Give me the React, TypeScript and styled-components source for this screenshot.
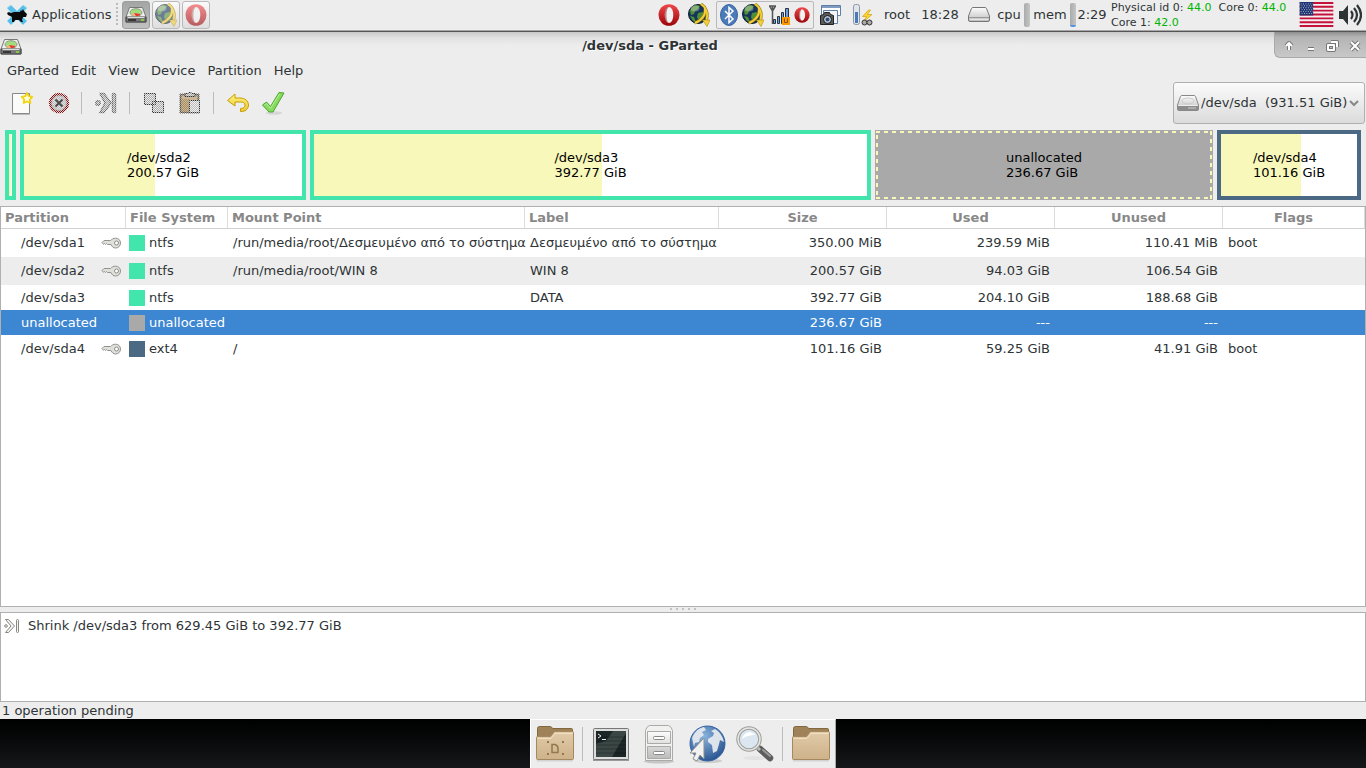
import React from 'react';
import styled, { createGlobalStyle, css } from 'styled-components';

const GlobalStyle = createGlobalStyle`
  *, *::before, *::after { box-sizing: border-box; }
  body {
    margin: 0;
    background: #0b0c0f;
    color: #2e3436;
    font-family: 'DejaVu Sans', sans-serif;
    font-size: 13px;
    line-height: 16px;
  }
  button, select {
    margin: 0;
    padding: 0;
    border: 0;
    background: none;
    color: inherit;
    font: inherit;
  }
  svg { display: block; flex: none; }
`;

const Desktop = styled.div`
  display: flex;
  flex-direction: column;
  min-height: 100vh;
  background: linear-gradient(#000 0, #000 720px, #15171a 100%);
`;

/* ---------- top panel ---------- */

const Panel = styled.header`
  display: flex;
  align-items: center;
  justify-content: space-between;
  height: 32px;
  padding-bottom: 2px;
  background: #ededed;
  border-bottom: 1px solid #555;
  box-shadow: inset 0 -1px #a8a8a8;
  white-space: nowrap;
`;

const PanelGroup = styled.div`
  display: flex;
  align-items: center;
`;

const ApplicationsButton = styled.button`
  display: flex;
  align-items: center;
  gap: 4px;
  padding: 0 5px 0 6px;
`;

const Handle = styled.span`
  width: 2px;
  height: 24px;
  margin-right: 4px;
  background: repeating-linear-gradient(#bbb 0 2px, transparent 2px 4px);
`;

const TaskButton = styled.button<{ $active?: boolean }>`
  display: flex;
  align-items: center;
  justify-content: center;
  width: 28px;
  height: 28px;
  margin-right: 2px;
  border: 1px solid ${(p) => (p.$active ? '#9c9e9d' : '#b9b9b9')};
  border-radius: 3px;
  background: ${(p) => (p.$active ? 'linear-gradient(#a2a5a3, #bfc2c0)' : 'linear-gradient(#fafafa, #dedede)')};
  svg { opacity: ${(p) => (p.$active ? 1 : 0.6)}; }
`;

const Slot = styled.span<{ $width: number }>`
  display: flex;
  align-items: center;
  justify-content: center;
  width: ${(p) => p.$width}px;
`;

const Tray = styled.div`
  display: flex;
  align-items: center;
  justify-content: space-between;
  width: 98px;
  height: 28px;
  margin-left: 2px;
  padding: 0 3px;
  border: 1px solid #b9b9b9;
  border-radius: 2px;
`;

const Meter = styled.span<{ $fill?: boolean }>`
  width: 6px;
  height: 24px;
  border-radius: 2px;
  background: ${(p) =>
    p.$fill
      ? 'linear-gradient(transparent 22px, #5294e2 22px), linear-gradient(90deg, #a9acaa, #c4c6c5)'
      : 'linear-gradient(90deg, #a9acaa, #c4c6c5)'};
`;

const Sensors = styled.div`
  width: 191px;
  padding-left: 3px;
  font-size: 11px;
  line-height: 15px;
  white-space: pre;
  b { color: #00b400; font-weight: normal; }
`;

/* ---------- window ---------- */

const AppWindow = styled.main`
  display: flex;
  flex: 1;
  flex-direction: column;
  background: linear-gradient(#c9c9c9, #e2e2e2 6px, #ededed 14px);
`;

const TitleBar = styled.div`
  display: flex;
  align-items: flex-start;
  height: 26px;
`;

const TitleIcon = styled.span`
  padding: 6px 4px 0 0;
`;

const Title = styled.h1`
  flex: 1;
  margin: 0;
  padding-top: 6px;
  font-size: 13px;
  line-height: 16px;
  text-align: center;
  text-shadow: 1px 1px #fff;
`;

const WindowControls = styled.div`
  display: flex;
  align-items: center;
  justify-content: space-around;
  width: 92px;
  height: 26px;
  padding: 2px 0 0 3px;
  border: 1px solid #a9a9a9;
  border-top: 0;
  border-right: 0;
  border-bottom-left-radius: 6px;
  background: linear-gradient(#8e8e8e, #b4b4b4 5px, #c8c8c8);
`;

const MenuBar = styled.nav`
  display: flex;
  align-items: center;
  height: 24px;
  padding: 2px 0 0 1px;
`;

const MenuButton = styled.button`
  padding: 2px 6px;
`;

const ToolBar = styled.div`
  display: flex;
  align-items: center;
  height: 42px;
  padding-right: 1px;
`;

const ToolButton = styled.button<{ $width?: number }>`
  display: flex;
  align-items: center;
  justify-content: center;
  width: ${(p) => p.$width ?? 36}px;
  height: 40px;
`;

const ToolSeparator = styled.span`
  width: 1px;
  height: 22px;
  margin: 0 6px 0 5px;
  background: #bcbcbc;
`;

const DeviceBox = styled.label`
  display: flex;
  align-items: center;
  position: relative;
  width: 192px;
  height: 42px;
  margin-left: auto;
  padding: 0 5px 0 3px;
  border: 1px solid #b0b0b0;
  border-radius: 3px;
  background: linear-gradient(#fbfbfb, #dbdbdb);
  white-space: nowrap;
`;

const DeviceSelect = styled.select`
  flex: 1;
  height: 32px;
  padding-left: 2px;
  appearance: none;
  outline: none;
`;

const Chevron = styled.svg`
  position: absolute;
  right: 5px;
  pointer-events: none;
`;

/* ---------- disk map ---------- */

const DiskMap = styled.section`
  display: grid;
  grid-template-columns: 11px 286fr 561fr 338fr 144fr;
  gap: 4px;
  padding: 6px 5px;
`;

const Segment = styled.div<{ $color: string; $used: number; $free?: boolean }>`
  display: flex;
  align-items: center;
  justify-content: center;
  position: relative;
  height: 70px;
  overflow: hidden;
  border: 4px solid ${(p) => p.$color};
  background: linear-gradient(90deg, #f8f8ba ${(p) => p.$used}%, #fff ${(p) => p.$used}%);
  color: #000;
  line-height: 15px;
  white-space: pre;
  ${(p) =>
    p.$free &&
    css`
      border: 1px solid ${p.$color};
      background: ${p.$color};
    `}
`;

const FreeOutline = styled.svg`
  position: absolute;
  inset: 0;
  width: 100%;
  height: 100%;
`;

/* ---------- partition table ---------- */

const TablePane = styled.section`
  flex: 1;
  border: 1px solid #b0b0b0;
  background: #fff;
`;

const PartitionTable = styled.table`
  width: 100%;
  border-collapse: separate;
  border-spacing: 0;
  table-layout: fixed;
  white-space: nowrap;
`;

const HeadCell = styled.th<{ $align?: string }>`
  height: 22px;
  padding: 0 4px;
  border-right: 1px solid #dcdcdc;
  border-bottom: 1px solid #d0d0d0;
  color: #888;
  font-weight: bold;
  text-align: ${(p) => p.$align ?? 'left'};
`;

const Row = styled.tr<{ $height: number; $shade?: boolean; $selected?: boolean }>`
  height: ${(p) => p.$height}px;
  background: ${(p) => (p.$selected ? '#3d86d1' : p.$shade ? '#ededed' : '#fff')};
  color: ${(p) => (p.$selected ? '#fff' : 'inherit')};
`;

const Cell = styled.td<{ $align?: string }>`
  padding: 0 5px;
  text-align: ${(p) => p.$align ?? 'left'};
`;

const NameCell = styled.div`
  display: flex;
  align-items: center;
  justify-content: space-between;
  padding-left: 15px;
`;

const FsCell = styled.div`
  display: flex;
  align-items: center;
  gap: 4px;
  margin-left: -2px;
`;

const Swatch = styled.span<{ $color: string }>`
  flex: none;
  width: 16px;
  height: 16px;
  background: ${(p) => p.$color};
`;

/* ---------- pending operations ---------- */

const Splitter = styled.div`
  display: flex;
  justify-content: center;
  height: 5px;
  padding-top: 1px;
`;

const Grip = styled.span`
  width: 26px;
  height: 2px;
  background: repeating-linear-gradient(90deg, #c0c4c1 0 2px, transparent 2px 6px);
`;

const Operations = styled.ul`
  height: 90px;
  margin: 0;
  padding: 3px;
  border: 1px solid #b0b0b0;
  background: #fff;
  list-style: none;
`;

const Operation = styled.li`
  display: flex;
  align-items: center;
  gap: 8px;
  height: 20px;
`;

const StatusBar = styled.footer`
  height: 17px;
  padding: 1px 0 0 2px;
`;

/* ---------- dock ---------- */

const Dock = styled.nav`
  display: flex;
  align-items: center;
  align-self: center;
  height: 49px;
  border: 1px solid #fff;
  border-right-color: #aaa;
  border-bottom: 0;
  background: #ededed;
`;

const DockButton = styled.button`
  display: flex;
  align-items: center;
  justify-content: center;
  width: 48px;
  height: 48px;
`;

const DockSeparator = styled.span`
  width: 1px;
  height: 34px;
  margin: 0 4px 0 3px;
  background: #bcbcbc;
`;

/* ---------- drawings ---------- */

const Defs = () => (
  <svg width="0" height="0" style={{ position: 'absolute' }} aria-hidden="true">
    <defs>
      <pattern id="dither" width="2" height="2" patternUnits="userSpaceOnUse">
        <path d="M0 0h1v1h-1zM1 1h1v1h-1z" fill="#fff" shapeRendering="crispEdges" />
      </pattern>
      <mask id="dithered" maskUnits="userSpaceOnUse" x="0" y="0" width="24" height="24">
        <rect width="24" height="24" fill="url(#dither)" />
      </mask>
      <linearGradient id="red" x1="0" y1="0" x2="0" y2="1">
        <stop offset="0" stopColor="#f0474b" />
        <stop offset="1" stopColor="#9b0508" />
      </linearGradient>
      <linearGradient id="silver" x1="0" y1="0" x2="0" y2="1">
        <stop offset="0" stopColor="#fdfdfd" />
        <stop offset="1" stopColor="#bcbcbc" />
      </linearGradient>
      <linearGradient id="folder" x1="0" y1="0" x2="0" y2="1">
        <stop offset="0" stopColor="#e2cba9" />
        <stop offset="1" stopColor="#cdb28a" />
      </linearGradient>
      <linearGradient id="gold" x1="0" y1="0" x2="0" y2="1">
        <stop offset="0" stopColor="#fff27a" />
        <stop offset="1" stopColor="#edc53a" />
      </linearGradient>
      <radialGradient id="ocean" cx="0.4" cy="0.3" r="0.8">
        <stop offset="0" stopColor="#8ab4de" />
        <stop offset="1" stopColor="#204a87" />
      </radialGradient>
    </defs>
  </svg>
);

const XfceLogo = () => (
  <svg width="22" height="22" viewBox="0 0 22 22">
    <path d="M1 4l4-3 6 6 6-6 4 3-6 7 6 6-4 4-6-6-6 6-4-4 6-6z" fill="#58bfe9" stroke="#a5dcf3" />
    <path d="M1 9l2-1 2 1 3-1h6l1-2 1 1 1-2 1 2 3 3-1 3-3 0-1 3 1 2-2 0-2-2-4 0-1 2-2 0 0-5-4-2z" fill="#0a0a0a" />
  </svg>
);

const GpartedIcon = () => (
  <svg width="22" height="18" viewBox="0 0 22 18">
    <path d="M4.500 1.500h13l3.500 9.500v5H1v-5z" fill="#eee" stroke="#777" />
    <path d="M1 11h20v5H1z" fill="#777" stroke="#444" />
    <path d="M2.500 11.500h17" stroke="#ddd" />
    <path d="M3 14h8" stroke="#222" strokeWidth="1.500" />
    <ellipse cx="11" cy="6.500" rx="6" ry="3.800" fill="#a3dc7c" stroke="#8d9a84" />
    <path d="M9 7l6.500 1c-1 1.500-2.500 2.200-4.500 2.200z" fill="#e33" />
    <path d="M9 7l-3 1.500 2 1.500h2.500z" fill="#f2b27a" />
    <path d="M16 14h3" stroke="#8ae234" strokeWidth="1.500" />
  </svg>
);

const GlobeArrow = () => (
  <svg width="22" height="24" viewBox="0 0 22 24">
    <circle cx="10" cy="11" r="9.500" fill="#16355c" stroke="#0d1c30" />
    <path d="M2 8c1-3 4-6 7-6l3 1-2 3-3 2-1 3-3 1zM10 10l5-1 2 3-2 4-4 3-2-5zM2 13l4 1 2 5-3-1z" fill="#4f8f38" />
    <ellipse cx="7" cy="5.500" rx="4.500" ry="3" fill="#fff" opacity=".3" />
    <path d="M13 1c5 3 7.500 9 5.500 16M17 5c1 7-3 12-10 15" fill="none" stroke="#9a7a0c" strokeWidth="3" />
    <path d="M13 1c5 3 7.500 9 5.500 16M17 5c1 7-3 12-10 15" fill="none" stroke="#f3d03a" strokeWidth="2" />
    <path d="M14.500 17l7.500 0-3 6.500z" fill="#f3d03a" stroke="#b08c12" strokeWidth=".6" />
  </svg>
);

const OperaIcon = ({ size = 22 }: { size?: number }) => (
  <svg width={size} height={size} viewBox="0 0 22 22">
    <ellipse cx="11" cy="11" rx="10.500" ry="10.800" fill="url(#red)" />
    <ellipse cx="11" cy="11" rx="4.300" ry="8" fill="#f2f2f2" />
    <path d="M11 3c-3 0-4.300 4-4.300 8s1.300 8 4.300 8c-1.800-1-2.600-4-2.600-8s.8-7 2.600-8z" fill="#8c0a0c" opacity=".5" />
  </svg>
);

const Bluetooth = () => (
  <svg width="18" height="22" viewBox="0 0 18 22">
    <ellipse cx="9" cy="11" rx="8.500" ry="10.500" fill="#4a7ab8" stroke="#3a659f" />
    <path d="M5 7l8 8-4 3.500v-15l4 3.500-8 8" fill="none" stroke="#fff" strokeWidth="1.500" />
  </svg>
);

const Signal = () => (
  <svg width="21" height="22" viewBox="0 0 21 22">
    <path d="M0 2h7M3.500 2v18M0.500 2l3 5 3-5" fill="none" stroke="#555" strokeWidth="1.500" />
    <path d="M4.500 15.500h2v4h-2zM8.500 12.500h2v7h-2zM12.500 8.500h2v11h-2zM16.500 4.500h3v15h-3z" fill="#6d9fdc" stroke="#28323e" />
    <path d="M13 13h8v8h-8z" fill="#f90" />
    <path d="M15.500 14.500v4h3v-4" fill="none" stroke="#86500a" />
  </svg>
);

const Screenshot = () => (
  <svg width="22" height="22" viewBox="0 0 22 22">
    <path d="M2.500 1.500h19v10h-19z" fill="#fff" stroke="#5f7fa5" />
    <path d="M3 2h18v2H3z" fill="#7f9cc0" />
    <path d="M4.500 6.500h14v13h-14z" fill="#f3f5f8" stroke="#5f7fa5" />
    <path d="M1.500 11.500l3-1 1-2h5l1 2 3 1v9h-13z" fill="#5a5a5a" stroke="#222" />
    <circle cx="8.500" cy="15.500" r="4" fill="#bcc8d5" stroke="#111" />
    <circle cx="8.500" cy="15.500" r="2" fill="#2d4e74" />
  </svg>
);

const PowerGauge = () => (
  <svg width="22" height="22" viewBox="0 0 22 22">
    <rect x="2.500" y="0.500" width="6" height="20" rx="2" fill="#dfe5ea" stroke="#8b98a6" />
    <path d="M4 8h3v11H4z" fill="#4a7ab8" />
    <path d="M17.500 6l-6 6.500h4l-2.500 5 8-7h-4.500l3-4.500z" fill="#ffd42a" stroke="#c79800" strokeWidth=".6" />
    <circle cx="13.500" cy="18.500" r="2.500" fill="#aaa" stroke="#333" />
    <circle cx="18.500" cy="18.500" r="2.500" fill="#aaa" stroke="#333" />
  </svg>
);

const Drive = () => (
  <svg width="22" height="16" viewBox="0 0 22 16">
    <path d="M5 .5h12q1 0 1.500 1L21.500 10v4q0 1.500-1 1.500h-19q-1 0-1-1.500V10l3-8.500q.5-1 1.500-1z" fill="url(#silver)" stroke="#888" />
    <path d="M1 11h20v4H1z" fill="#8c8c8c" />
    <ellipse cx="11" cy="6" rx="6" ry="3" fill="none" stroke="#ccc" />
    <path d="M1.500 10.500h19" stroke="#eee" />
    <path d="M11 13h8" stroke="#ccc" />
  </svg>
);

const PlainDrive = () => (
  <svg width="22" height="15" viewBox="0 0 22 15">
    <path d="M5 .5h12q1 0 1.500 1L21.500 9v4q0 1.500-1.500 1.500H2Q.5 14.500.5 13V9l3-7.500q.5-1 1.500-1z" fill="url(#silver)" stroke="#777" />
    <path d="M1 10.500h20" stroke="#999" />
    <path d="M2 12.500h18" stroke="#e8e8e8" />
  </svg>
);

const UsFlag = () => (
  <svg width="35" height="25" viewBox="0 0 35 26">
    <path d="M0 0h35v26H0z" fill="#f5eef0" />
    <path d="M0 1h35M0 5h35M0 9h35M0 13h35M0 17h35M0 21h35M0 25h35" stroke="#c4123a" strokeWidth="2" />
    <path d="M0 0h14v14H0z" fill="#1d3370" />
    <path d="M1 2h13M2 4h12M1 6h13M2 8h12M1 10h13M2 12h12" stroke="#b9c3dc" strokeDasharray="1 1.500" />
  </svg>
);

const Speaker = () => (
  <svg width="23" height="22" viewBox="0 0 23 22">
    <path d="M0 7h4l5-6v20l-5-6H0z" fill="#2e3436" />
    <path d="M12 7q3 4 0 8M15 4q6 7 0 14M18 1q8 10 0 20" fill="none" stroke="#2e3436" strokeWidth="2.200" />
  </svg>
);

const ControlIcon = ({ d }: { d: string }) => (
  <svg width="14" height="14" viewBox="0 0 14 14" strokeLinejoin="round">
    <path d={d} fill="none" stroke="#777" strokeWidth="4" />
    <path d={d} fill="none" stroke="#fff" strokeWidth="2" />
  </svg>
);

const NewIcon = () => (
  <svg width="24" height="24" viewBox="0 0 24 24">
    <path d="M3.500 2.500h17v20h-17z" fill="#fbfbf9" stroke="#888" />
    <path d="M3 23.500h18" stroke="#bbb" />
    <path d="M18 2l1.700 3.200 3.600.6-2.500 2.700.5 3.500-3.300-1.500-3.300 1.500.5-3.500-2.500-2.700 3.600-.6z" fill="#fffde0" stroke="#f2d40e" strokeWidth="1.800" strokeLinejoin="round" />
  </svg>
);

const DeleteIcon = () => (
  <svg width="24" height="24" viewBox="0 0 24 24">
    <circle cx="12" cy="12" r="8" fill="#e2e2e2" stroke="#ccc" strokeWidth="3" />
    <g mask="url(#dithered)">
      <circle cx="12" cy="12" r="9" fill="#bbb" stroke="#8e0a0a" strokeWidth="2.500" />
    </g>
    <path d="M8.500 8.500l7 7M15.500 8.500l-7 7" stroke="#4a4a4a" strokeWidth="2" />
  </svg>
);

const ResizeShape = () => (
  <>
    <path d="M6 2.500h4l7 9.500-7 9.500H6l5-9.500z" />
    <circle cx="4" cy="12" r="2.200" />
    <rect x="18.500" y="2.500" width="3" height="19" rx="1" />
  </>
);

const ResizeIcon = () => (
  <svg width="24" height="24" viewBox="0 0 24 24">
    <g fill="#ddd" stroke="#c6c6c6"><ResizeShape /></g>
    <g fill="#a8a8a8" stroke="#666" strokeWidth="1.500" mask="url(#dithered)"><ResizeShape /></g>
  </svg>
);

const SmallResizeIcon = () => (
  <svg width="16" height="16" viewBox="0 0 16 16" fill="#f6f6f4" stroke="#85877f">
    <path d="M1.500 1.500h3l6 6.500-6 6.500h-3L7 8z" />
    <circle cx="2" cy="8" r="1.300" />
    <rect x="12.500" y="1.500" width="2" height="13" rx="1" />
  </svg>
);

const CopyIcon = () => (
  <svg width="24" height="24" viewBox="0 0 24 24">
    <path d="M2.500 2.500h11v11h-11zM10.500 10.500h11v11h-11z" fill="#ececec" stroke="#c0c0c0" />
    <g mask="url(#dithered)">
      <path d="M2.500 2.500h11v11h-11zM10.500 10.500h11v11h-11z" fill="#aaa" stroke="#333" />
    </g>
  </svg>
);

const PasteIcon = () => (
  <svg width="24" height="24" viewBox="0 0 24 24">
    <path d="M2.500 3.500h18v18h-18z" fill="#cbb795" stroke="#a69579" />
    <path d="M7 5.500v-3h3l1-1h2l1 1h3v3z" fill="#ddd" stroke="#999" />
    <path d="M11.500 9.500h10v12h-10z" fill="#f2f2f2" stroke="#bbb" />
    <g mask="url(#dithered)">
      <path d="M2.500 3.500h18v18h-18z" fill="none" stroke="#555" strokeWidth="2" />
      <path d="M4 8h7v12H4z" fill="#a98f60" />
      <path d="M7 5.500v-3h3l1-1h2l1 1h3v3z" fill="#aaa" stroke="#333" />
      <path d="M11.500 9.500h10v12h-10z" fill="#bbb" stroke="#333" />
    </g>
  </svg>
);

const UndoIcon = () => (
  <svg width="24" height="24" viewBox="0 0 24 24">
    <path d="M1.500 9.500l7.500-6.500v4h5c5 0 8.500 3 8.500 7 0 3.500-2.500 6-6 6.500h-2v-3c3 0 4.500-1.500 4.500-3.500s-1.500-3-4.500-3H9v4z" fill="url(#gold)" stroke="#c4a000" strokeLinejoin="round" />
  </svg>
);

const ApplyIcon = () => (
  <svg width="24" height="24" viewBox="0 0 24 24">
    <ellipse cx="13" cy="22" rx="8" ry="1.800" fill="#d6d6d6" />
    <path d="M1.500 14l4-3 4 4.500L18 1.500l5 0.500-11 19H8z" fill="#84db5e" stroke="#4da52c" strokeLinejoin="round" />
    <path d="M3.500 14l2-1.300 4 4.600L18.500 3" fill="none" stroke="#b9f09d" />
  </svg>
);

const KeyIcon = () => (
  <svg width="20" height="14" viewBox="0 0 20 14">
    <path d="M9.500 4.500H3l-2 2 1.500 1.800 1-.8 1 1 1-1 1 1h3.500c1 2.300 2.500 3.500 4.500 3.500 3 0 5-2.200 5-5s-2-4.800-5-4.800c-2.200 0-4 1.200-5 2.300z" fill="#dfdfdc" stroke="#93938e" />
    <circle cx="15.500" cy="7" r="2" fill="#fff" stroke="#8d8d88" />
  </svg>
);

const FolderIcon = ({ docs }: { docs?: boolean }) => (
  <svg width="40" height="38" viewBox="0 0 40 38">
    <path d="M2 35.500h36" stroke="#d2d2d2" strokeWidth="2" />
    <path d="M2.500 3.500q0-2 2-2h11q1 0 2 2h19q1 0 1 1V18h-35z" fill="#a08259" stroke="#83683f" />
    <path d="M1.500 12.500q0-1 1-1h13l4-5h18q1 0 1 1v26q0 1-1 1h-35q-1 0-1-1z" fill="url(#folder)" stroke="#a5885d" />
    <path d="M2.500 13.500h13.500l4-5h17.500" fill="none" stroke="#f0dfc4" />
    {docs && (
      <g fill="none" stroke="#94774e">
        <path d="M17 19.500h3q3 1 3 4v4h-6z" strokeWidth="1.500" />
        <path d="M12 17h2M12 29h2M27 17h2M27 29h2" strokeWidth="2" />
      </g>
    )}
  </svg>
);

const TerminalIcon = () => (
  <svg width="38" height="36" viewBox="0 0 38 36">
    <path d="M1 34h36" stroke="#999" strokeWidth="2" />
    <rect x="1.500" y="2.500" width="35" height="31" rx="1" fill="#ddd" stroke="#777" />
    <path d="M4 5h30v26H4z" fill="#1c2626" />
    <path d="M21 5h13v2L20 31H4V18l10-3z" fill="#55625f" opacity=".55" />
    <path d="M4 11h30M4 15h30M4 19h30M4 23h30M4 27h30" stroke="#000" opacity=".25" />
    <path d="M6 8l3 2-3 2M10 13.500h4" fill="none" stroke="#eee" />
  </svg>
);

const CabinetIcon = () => (
  <svg width="32" height="40" viewBox="0 0 32 40">
    <ellipse cx="16" cy="37.500" rx="15" ry="2" fill="#c6c6c6" />
    <path d="M2.500 6.500q1-4 4-5h19q3 1 4 5v30h-27z" fill="#f1f2ef" stroke="#a9aba6" />
    <path d="M4.500 7.500h23v12h-23zM4.500 22.500h23v12h-23z" fill="url(#silver)" stroke="#a9aba6" />
    <rect x="10.500" y="12.500" width="11" height="3" rx="1" fill="#fff" stroke="#888" />
    <rect x="10.500" y="27.500" width="11" height="3" rx="1" fill="#fff" stroke="#888" />
  </svg>
);

const WebIcon = () => (
  <svg width="40" height="40" viewBox="0 0 40 40">
    <ellipse cx="21" cy="37" rx="14" ry="2" fill="#ccc" />
    <circle cx="20.500" cy="19.500" r="17.500" fill="url(#ocean)" stroke="#3465a4" />
    <path d="M5 14c3-7 7-10 12-11l2 3-4 2 2 3-4 3-1 4-4 1-1 4zM21 15l5-3 1-3-3-2 4-2c5 3 8 8 9 13l-4-2-1 4-2 7-4 2-1-8-4-3z" fill="#e5e9ee" opacity=".95" />
    <path d="M17 14v21l-4-4-3 6-4-2 3-6H3z" fill="#f2f2f0" stroke="#8e908c" strokeLinejoin="round" />
  </svg>
);

const SearchIcon = () => (
  <svg width="40" height="40" viewBox="0 0 40 40">
    <ellipse cx="20" cy="34" rx="12" ry="2" fill="#e3e3e3" />
    <path d="M25 25l10 9" stroke="#5c5e5c" strokeWidth="6.500" strokeLinecap="round" />
    <path d="M28 26l7 6" stroke="#999" strokeWidth="2" strokeLinecap="round" />
    <path d="M21 22l4 4" stroke="#bbb" strokeWidth="3" />
    <circle cx="14" cy="15" r="11" fill="#dbe6f0" stroke="#9c9e9a" strokeWidth="3.500" />
    <circle cx="14" cy="15" r="11" fill="none" stroke="#e6e6e4" strokeWidth="1.500" />
    <path d="M7 15q1-6 8-7 4 1 5 3-8 0-13 4z" fill="#fff" />
  </svg>
);

/* ---------- data ---------- */

const GREEN = '#42e5ac';
const NAVY = '#4b6983';
const GREY = '#a9a9a9';

const partitions = [
  { name: '/dev/sda1', locked: true, fs: 'ntfs', color: GREEN, mount: '/run/media/root/Δεσμευμένο από το σύστημα', label: 'Δεσμευμένο από το σύστημα', size: '350.00 MiB', used: '239.59 MiB', unused: '110.41 MiB', flags: 'boot' },
  { name: '/dev/sda2', locked: true, fs: 'ntfs', color: GREEN, mount: '/run/media/root/WIN 8', label: 'WIN 8', size: '200.57 GiB', used: '94.03 GiB', unused: '106.54 GiB', flags: '' },
  { name: '/dev/sda3', locked: false, fs: 'ntfs', color: GREEN, mount: '', label: 'DATA', size: '392.77 GiB', used: '204.10 GiB', unused: '188.68 GiB', flags: '' },
  { name: 'unallocated', locked: false, fs: 'unallocated', color: GREY, mount: '', label: '', size: '236.67 GiB', used: '---', unused: '---', flags: '' },
  { name: '/dev/sda4', locked: true, fs: 'ext4', color: NAVY, mount: '/', label: '', size: '101.16 GiB', used: '59.25 GiB', unused: '41.91 GiB', flags: 'boot' },
];

const columns: { title: string; width?: number; align?: string }[] = [
  { title: 'Partition', width: 125 },
  { title: 'File System', width: 102 },
  { title: 'Mount Point', width: 297 },
  { title: 'Label', width: 194 },
  { title: 'Size', width: 168, align: 'center' },
  { title: 'Used', width: 168, align: 'center' },
  { title: 'Unused', width: 168, align: 'center' },
  { title: 'Flags', align: 'center' },
];

const menus = ['GParted', 'Edit', 'View', 'Device', 'Partition', 'Help'];

export default function App() {
  return (
    <Desktop>
      <GlobalStyle />
      <Defs />
      <Panel>
        <PanelGroup>
          <ApplicationsButton><XfceLogo />Applications</ApplicationsButton>
          <Handle />
          <TaskButton $active aria-label="GParted"><GpartedIcon /></TaskButton>
          <TaskButton aria-label="Downloads"><GlobeArrow /></TaskButton>
          <TaskButton aria-label="Opera"><OperaIcon /></TaskButton>
        </PanelGroup>
        <PanelGroup>
          <Slot $width={30}><OperaIcon /></Slot>
          <Slot $width={30}><GlobeArrow /></Slot>
          <Tray>
            <Bluetooth />
            <GlobeArrow />
            <Signal />
            <OperaIcon size={16} />
          </Tray>
          <Slot $width={32}><Screenshot /></Slot>
          <Slot $width={32}><PowerGauge /></Slot>
          <Slot $width={38}>root</Slot>
          <Slot $width={48}>18:28</Slot>
          <Slot $width={30}><PlainDrive /></Slot>
          <Slot $width={30}>cpu</Slot>
          <Meter />
          <Slot $width={40}>mem</Slot>
          <Meter $fill />
          <Slot $width={32}>2:29</Slot>
          <Sensors>
            Physical id 0: <b>44.0</b>{'  '}Core 0: <b>44.0</b>{'\n'}Core 1: <b>42.0</b>
          </Sensors>
          <Slot $width={35}><UsFlag /></Slot>
          <Slot $width={32}><Speaker /></Slot>
        </PanelGroup>
      </Panel>

      <AppWindow>
        <TitleBar>
          <TitleIcon><GpartedIcon /></TitleIcon>
          <Title>/dev/sda - GParted</Title>
          <WindowControls>
            <button aria-label="Roll up"><ControlIcon d="M7 11V4M4 7l3-3 3 3" /></button>
            <button aria-label="Minimize"><ControlIcon d="M4 10h6" /></button>
            <button aria-label="Restore"><ControlIcon d="M2 6h6v5H2zM5 3h6v5" /></button>
            <button aria-label="Close"><ControlIcon d="M3 3l8 8M11 3l-8 8" /></button>
          </WindowControls>
        </TitleBar>
        <MenuBar>
          {menus.map((m) => <MenuButton key={m}>{m}</MenuButton>)}
        </MenuBar>
        <ToolBar>
          <ToolButton $width={42} aria-label="New"><NewIcon /></ToolButton>
          <ToolButton $width={34} aria-label="Delete"><DeleteIcon /></ToolButton>
          <ToolSeparator />
          <ToolButton aria-label="Resize/Move"><ResizeIcon /></ToolButton>
          <ToolSeparator />
          <ToolButton aria-label="Copy"><CopyIcon /></ToolButton>
          <ToolButton aria-label="Paste"><PasteIcon /></ToolButton>
          <ToolSeparator />
          <ToolButton aria-label="Undo"><UndoIcon /></ToolButton>
          <ToolButton $width={34} aria-label="Apply"><ApplyIcon /></ToolButton>
          <DeviceBox>
            <Drive />
            <DeviceSelect aria-label="Device">
              <option>{'/dev/sda\u00a0\u00a0(931.51 GiB)'}</option>
            </DeviceSelect>
            <Chevron width="10" height="8" viewBox="0 0 10 8">
              <path d="M1 2l4 4 4-4" fill="none" stroke="#888" strokeWidth="2" />
            </Chevron>
          </DeviceBox>
        </ToolBar>

        <DiskMap>
          <Segment $color={GREEN} $used={67} />
          <Segment $color={GREEN} $used={47}>{'/dev/sda2\n200.57 GiB'}</Segment>
          <Segment $color={GREEN} $used={52}>{'/dev/sda3\n392.77 GiB'}</Segment>
          <Segment $color={GREY} $used={0} $free>
            <FreeOutline>
              <rect width="100%" height="100%" fill="none" stroke="#f8f8ba" strokeWidth="4" strokeDasharray="4 4" />
            </FreeOutline>
            {'unallocated\n236.67 GiB'}
          </Segment>
          <Segment $color={NAVY} $used={59}>{'/dev/sda4\n101.16 GiB'}</Segment>
        </DiskMap>

        <TablePane>
          <PartitionTable>
            <colgroup>
              {columns.map((c) => <col key={c.title} width={c.width} />)}
            </colgroup>
            <thead>
              <tr>
                {columns.map((c) => <HeadCell key={c.title} $align={c.align}>{c.title}</HeadCell>)}
              </tr>
            </thead>
            <tbody>
              {partitions.map((p, i) => (
                <Row key={p.name} $height={p.locked ? 28 : 25} $shade={i === 1} $selected={i === 3}>
                  <Cell><NameCell>{p.name}{p.locked && <KeyIcon />}</NameCell></Cell>
                  <Cell><FsCell><Swatch $color={p.color} />{p.fs}</FsCell></Cell>
                  <Cell>{p.mount}</Cell>
                  <Cell>{p.label}</Cell>
                  <Cell $align="right">{p.size}</Cell>
                  <Cell $align="right">{p.used}</Cell>
                  <Cell $align="right">{p.unused}</Cell>
                  <Cell>{p.flags}</Cell>
                </Row>
              ))}
            </tbody>
          </PartitionTable>
        </TablePane>
        <Splitter><Grip /></Splitter>
        <Operations>
          <Operation><SmallResizeIcon />Shrink /dev/sda3 from 629.45 GiB to 392.77 GiB</Operation>
        </Operations>
        <StatusBar>1 operation pending</StatusBar>
      </AppWindow>

      <Dock>
        <DockButton aria-label="Desktop folder"><FolderIcon docs /></DockButton>
        <DockSeparator />
        <DockButton aria-label="Terminal"><TerminalIcon /></DockButton>
        <DockButton aria-label="File manager"><CabinetIcon /></DockButton>
        <DockButton aria-label="Web browser"><WebIcon /></DockButton>
        <DockButton aria-label="Application finder"><SearchIcon /></DockButton>
        <DockSeparator />
        <DockButton aria-label="Home folder"><FolderIcon /></DockButton>
      </Dock>
    </Desktop>
  );
}
